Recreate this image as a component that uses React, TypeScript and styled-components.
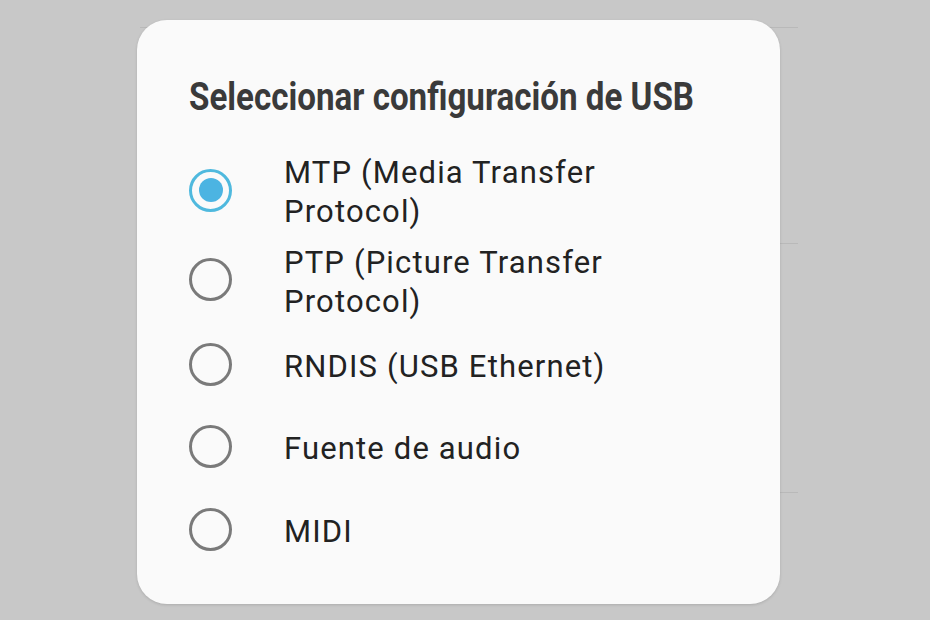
import styled, { createGlobalStyle } from "styled-components";

const GlobalStyle = createGlobalStyle`
    html, body {
        margin:0;
        padding:0;
        background:#c8c8c8;
    }
    * {
        box-sizing:border-box;
    }
`;

type Option = { label: string; checked?: boolean; h: number };

const options: Option[] = [
    { label: "MTP (Media Transfer Protocol)", checked: true, h: 92 },
    { label: "PTP (Picture Transfer Protocol)", h: 87 },
    { label: "RNDIS (USB Ethernet)", h: 82 },
    { label: "Fuente de audio", h: 82 },
    { label: "MIDI", h: 84 },
];

const App = () => {
    return (
        <>
            <GlobalStyle />
            <Screen>
                <Backdrop>
                    <BackRow $h={28} />
                    <BackRow $h={216} />
                    <BackRow $h={249} />
                </Backdrop>
                <Dialog>
                    <Title>Seleccionar configuración de USB</Title>
                    <List>
                        {options.map((o) => (
                            <Row key={o.label} $h={o.h}>
                                <Radio $checked={!!o.checked}>
                                    {o.checked && <Dot />}
                                </Radio>
                                <Label>{o.label}</Label>
                            </Row>
                        ))}
                    </List>
                </Dialog>
            </Screen>
        </>
    );
};

const Screen = styled.div`
    position:relative;
    width:930px;
    height:620px;
    overflow:hidden;
    background:#c8c8c8;
`;

const Backdrop = styled.div`
    margin-left:140px;
    width:658px;
    display:flex;
    flex-direction:column;
`;

const BackRow = styled.div<{ $h: number }>`
    height:${(p) => p.$h}px;
    border-bottom:1px solid #b9b9b9;
`;

const Dialog = styled.div`
    position:absolute;
    left:137px;
    top:20px;
    width:643px;
    height:584px;
    background:#fafafa;
    border-radius:30px;
    box-shadow:0 1px 3px rgba(0,0,0,.14);
    padding:55px 0 0 52px;
    display:flex;
    flex-direction:column;
`;

const Title = styled.h2`
    margin:0;
    font-family:Roboto, "Liberation Sans", sans-serif;
    font-weight:700;
    font-size:38px;
    line-height:44px;
    white-space:nowrap;
    color:#3a3a3a;
    transform:scaleX(0.872);
    transform-origin:left center;
`;

const List = styled.div`
    display:flex;
    flex-direction:column;
    margin-top:25px;
`;

const Row = styled.div<{ $h: number }>`
    display:flex;
    align-items:center;
    gap:52px;
    height:${(p) => p.$h}px;
`;

const Radio = styled.div<{ $checked: boolean }>`
    flex:none;
    width:43px;
    height:43px;
    border-radius:50%;
    border:3px solid ${(p) => (p.$checked ? "#4fb9de" : "#7a7a7a")};
    display:flex;
    align-items:center;
    justify-content:center;
`;

const Dot = styled.div`
    width:24px;
    height:24px;
    border-radius:50%;
    background:#4cb4e2;
`;

const Label = styled.div`
    width:345px;
    padding-top:4px;
    font-family:Roboto, "Liberation Sans", sans-serif;
    font-size:31px;
    line-height:39px;
    letter-spacing:1.15px;
    color:#222;
`;

export default App;
